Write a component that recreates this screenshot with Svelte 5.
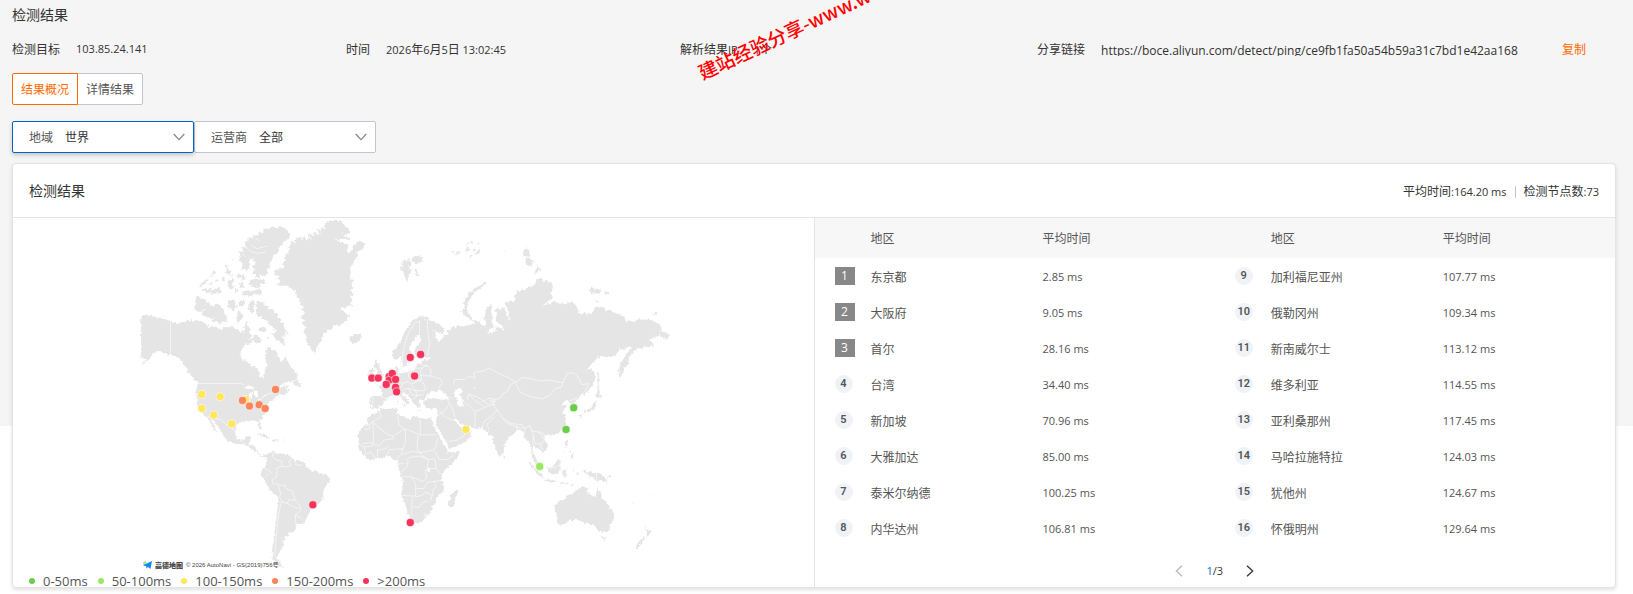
<script>
  const ranks = [
    ['东京都', '2.85 ms'], ['大阪府', '9.05 ms'], ['首尔', '28.16 ms'], ['台湾', '34.40 ms'],
    ['新加坡', '70.96 ms'], ['大雅加达', '85.00 ms'], ['泰米尔纳德', '100.25 ms'], ['内华达州', '106.81 ms'],
    ['加利福尼亚州', '107.77 ms'], ['俄勒冈州', '109.34 ms'], ['新南威尔士', '113.12 ms'], ['维多利亚', '114.55 ms'],
    ['亚利桑那州', '117.45 ms'], ['马哈拉施特拉', '124.03 ms'], ['犹他州', '124.67 ms'], ['怀俄明州', '129.64 ms']
  ].map(([region, time], i) => ({ rank: i + 1, region, time }));
  const halves = [ranks.slice(0, 8), ranks.slice(8)];

  const levels = {
    a: '#6bce4a',
    b: '#9be861',
    c: '#ffe65b',
    d: '#f9855c',
    e: '#f5345b'
  };
  const legend = [
    ['a', '0-50ms'], ['b', '50-100ms'], ['c', '100-150ms'], ['d', '150-200ms'], ['e', '>200ms']
  ];

  const americas = [
    // Mainland North America
    '63,318 70,315 78,311 84,317 90,316 97,320 108,320 117,325 125,325 138,328 150,332 158,338 165,336 174,341 178,341 184,334 190,334 193,338 200,331 208,334 215,325 218,331 222,334 228,329 235,333 246,333 250,338 256,337 262,344 264,350 270,352 278,349 285,352 300,356 301,364 308,354 314,350 326,352 336,349 345,356 355,358 360,368 366,362 372,366 372,350 377,335 382,334 384,348 391,358 388,370 396,376 385,388 396,384 398,390 390,400 376,402 364,418 360,432 363,444 368,448 380,455 395,466 410,474 416,485 417,498 425,505 433,492 434,480 442,468 438,450 434,436 437,430 436,418 442,413 450,414 462,420 470,424 472,434 480,448 486,455 492,446 496,438 502,452 510,460 512,472 524,480 526,488 533,494 528,508 512,514 495,518 484,526 478,534 490,528 505,526 496,536 500,541 515,532 502,547 485,555 478,550 472,558 462,565 456,572 446,578 440,585 444,596 436,610 428,621 418,631 420,642 426,656 420,658 414,647 412,634 400,630 390,634 380,631 370,636 358,637 348,650 345,670 350,685 362,692 372,688 376,680 392,677 391,690 384,698 395,705 405,707 408,720 418,732 428,736 438,731 448,732 440,742 434,740 425,738 412,730 404,722 396,718 390,713 378,710 372,702 365,702 350,702 335,696 318,690 312,682 310,673 300,660 290,645 280,632 270,623 275,634 284,650 294,668 288,664 277,650 268,634 262,620 254,617 245,607 235,600 231,586 230,565 227,545 232,528 236,520 228,511 222,514 216,500 205,488 200,472 192,466 188,455 182,452 180,445 168,440 158,436 150,434 140,434 130,428 122,426 115,422 104,428 96,434 88,448 78,456 63,468 74,452 82,444 72,446 63,442',
    // Greenland
    '625,32 640,29 655,33 668,34 668,42 676,52 688,58 690,68 678,74 664,70 678,80 690,82 690,90 668,86 645,92 664,96 684,104 682,120 685,132 694,118 700,104 710,106 708,96 720,94 734,101 730,114 718,122 708,128 712,140 700,150 702,160 692,168 690,180 694,190 686,198 690,210 702,212 692,222 698,234 690,240 700,250 692,258 698,268 690,276 698,290 684,286 672,294 660,290 670,304 688,316 680,330 668,340 655,346 640,346 636,356 622,362 610,372 606,382 602,394 592,408 585,428 574,420 570,410 562,404 558,390 560,380 550,366 556,350 546,340 552,330 541,322 556,312 544,300 552,290 541,285 538,265 530,260 525,245 510,232 500,226 482,228 470,222 486,212 468,208 480,200 462,192 460,184 475,176 490,172 488,160 496,150 492,140 504,128 508,108 516,92 526,102 524,88 540,80 548,90 552,78 560,92 562,82 572,88 565,68 576,74 582,84 580,64 592,76 600,72 588,56 602,60 604,52 618,60 610,46 618,40',
    '686,386 692,388 688,378 697,382 703,376 712,376 720,372 724,380 718,392 708,400 696,396',
    // Ellesmere and Axel Heiberg
    '510,70 508,80 500,90 488,98 484,108 474,115 474,128 460,136 456,150 446,160 450,172 440,178 442,192 430,200 418,192 420,204 405,205 408,192 395,190 404,180 395,170 410,160 398,154 400,144 386,150 390,166 380,186 372,172 362,182 368,160 355,154 360,138 355,124 368,126 366,112 378,112 374,98 384,94 386,82 396,84 400,74 412,78 418,64 428,68 432,56 445,58 455,50 470,55 475,48 490,54 500,58',
    '390,210 410,206 435,210 434,222 418,220 422,230 402,232 388,224',
    '368,244 385,240 392,246 408,238 425,240 424,254 405,252 390,258 366,255',
    '234,232 242,220 250,216 262,204 260,216 250,224 242,234', '270,198 278,186 290,180 284,194 276,200',
    '313,163 322,166 325,178 334,184 328,194 316,186 320,176', '246,240 256,234 266,240 274,230 272,242 286,236 300,230 298,240 308,244 288,250 272,250 256,246',
    '325,212 340,206 342,216 336,222 345,232 330,238 322,226', '350,192 358,190 365,198 370,192 376,206 368,210 360,202 352,206',
    '356,222 368,218 374,232 362,234', '304,204 312,202 314,212 308,216', '338,144 343,146 340,152', '348,236 356,240 350,248 343,244',
    '284,212 294,208 290,216', '264,222 276,218 272,226', '328,194 340,198 334,202',
    '228,260 236,260 240,266 252,266 262,275 252,284 250,296 238,308 223,298 225,280',
    '256,280 268,276 272,290 288,280 300,284 304,296 312,298 310,308 322,316 318,326 325,335 306,334 300,342 290,334 276,336 280,326 264,322 250,316 244,306 258,302 247,294',
    '325,272 336,268 345,272 346,280 352,290 344,296 340,306 330,294 322,288', '356,274 372,268 374,282 364,290 356,284',
    '354,305 362,304 368,318 362,332 352,340 350,322', '386,276 400,270 404,280 400,290 404,304 392,308 384,296',
    '408,276 416,270 426,276 436,276 430,286 446,288 442,298 458,296 462,308 474,312 470,322 484,326 480,336 492,340 488,350 500,362 506,374 494,368 496,380 486,378 494,390 488,394 500,408 486,404 478,392 468,390 458,374 448,372 468,366 458,350 444,342 446,332 430,328 424,318 412,318 408,304',
    '396,388 402,376 412,374 416,384 428,388 418,400 406,396', '420,352 434,350 440,358 430,366 418,362', '436,380 446,382 442,390',
    '518,514 530,510 540,520 543,528 532,528 522,526',
    // Caribbean
    '405,672 418,669 430,672 440,678 451,685 440,685 425,677 412,674', '455,687 466,686 475,690 468,693 456,692', '486,691 494,691 493,694',
    // South America
    '438,738 446,730 458,722 466,724 462,732 475,728 490,732 503,732 515,742 520,750 535,750 548,755 558,766 558,772 575,782 590,784 602,790 618,794 630,806 628,814 618,827 612,836 609,858 605,872 596,878 582,884 572,890 570,904 562,918 556,930 548,940 538,942 526,937 526,948 529,958 518,966 504,968 504,978 494,978 496,988 488,994 492,1006 484,1014 476,1032 470,1042 476,1052 486,1066 492,1074 478,1068 464,1056 456,1044 460,1034 455,1020 460,1000 459,984 465,960 468,930 471,900 475,875 473,858 458,850 446,834 436,814 422,796 424,780 434,770 441,755'
  ];

  const eurafrica = [
    // Africa
    '118,328 128,325 142,326 165,325 172,328 170,338 176,347 195,350 212,360 214,350 225,347 238,352 252,356 275,354 276,362 283,382 294,400 302,414 306,428 318,442 325,455 340,458 358,452 357,462 348,478 332,494 318,506 308,518 304,530 306,545 312,562 308,576 296,586 287,594 287,608 276,616 274,632 262,648 250,662 236,669 215,669 209,650 201,635 196,612 186,594 183,580 188,560 186,535 178,512 170,498 174,482 160,480 150,468 138,468 122,474 108,474 92,482 76,470 66,460 57,448 52,437 56,424 52,406 60,392 64,382 80,370 82,356 92,344 108,338',
    '352,565 354,578 348,590 344,606 336,622 327,618 326,604 332,592 332,582 344,576',
    // Eurasia
    '89,290 100,287 124,289 126,276 115,258 128,254 132,248 142,246 150,235 160,226 166,218 165,204 170,200 175,206 172,218 184,220 195,217 212,213 225,208 227,196 232,190 240,194 244,184 262,178 270,172 256,170 240,174 230,172 224,160 226,142 238,128 242,112 236,105 228,106 222,120 210,134 206,150 214,158 210,172 204,178 202,192 190,202 184,186 182,165 174,176 162,178 155,164 158,152 168,142 180,126 188,106 196,92 206,76 214,64 228,56 240,48 255,50 266,52 264,60 285,66 300,74 313,90 306,102 290,96 276,88 286,102 288,116 296,128 300,118 310,114 308,106 325,104 318,92 330,88 332,80 348,82 352,74 364,80 378,76 395,72 406,70 398,60 412,64 424,74 434,78 440,70 432,55 435,40 440,22 450,12 456,20 452,34 458,50 455,68 460,82 450,90 440,96 455,100 466,92 466,78 478,84 490,92 486,78 472,68 466,55 470,40 464,28 470,22 482,30 485,20 496,30 500,46 510,64 506,48 504,32 496,22 493,8 505,4 522,6 524,-14 532,-26 545,-32 556,-30 565,-42 582,-44 588,-56 602,-70 606,-58 620,-58 634,-50 641,-36 630,-22 638,-8 622,4 605,18 625,12 640,4 655,10 672,10 690,6 706,12 712,28 718,42 732,38 742,42 756,38 765,20 785,20 798,30 812,30 820,38 845,44 852,50 854,62 870,62 888,66 892,56 908,60 930,58 950,70 964,82 960,92 980,100 988,106 978,118 968,112 955,104 945,110 926,118 940,130 936,138 915,140 905,146 894,144 880,156 866,172 864,190 852,206 840,232 834,216 838,194 848,178 862,158 874,142 860,140 850,148 838,146 828,162 816,170 800,168 770,172 756,190 740,208 752,206 762,216 764,238 758,256 742,274 730,284 718,288 714,298 704,306 710,318 707,330 698,336 692,326 694,312 684,306 682,300 672,304 662,316 680,314 672,328 667,336 676,348 678,366 672,384 655,398 640,404 624,402 612,406 614,420 622,434 620,446 606,460 598,448 588,444 578,440 576,450 582,466 592,480 597,494 588,494 580,480 573,464 572,440 566,426 554,416 550,400 540,388 528,394 512,408 500,420 492,436 490,456 478,470 468,452 460,425 456,408 446,402 438,392 425,384 405,386 388,380 372,378 358,370 348,356 342,350 348,364 360,380 372,388 380,380 396,400 388,416 365,430 345,440 326,446 318,426 306,404 292,382 286,366 290,352 292,335 288,326 270,325 255,322 248,305 258,298 280,294 300,298 322,300 326,292 312,280 298,268 288,278 276,270 264,282 258,290 248,300 240,300 234,306 242,318 232,324 224,314 214,298 200,284 188,276 186,284 198,296 210,306 202,314 190,300 176,284 168,282 155,290 142,292 136,302 128,312 110,325 95,325 88,310',
    '104,178 112,180 110,188 120,192 116,202 124,212 130,226 124,240 112,243 98,246 108,238 104,228 112,220 110,206 102,200 104,190', '86,214 98,206 102,214 98,226 86,230 84,222',
    '27,106 36,110 44,102 55,104 62,100 64,112 54,124 42,130 30,124',
    '168,298 172,302 171,316 167,314', '184,312 198,311 194,320', '228,331 244,331 240,334', '272,320 284,316 278,324',
    // Arctic islands
    '178,-118 186,-112 190,-122 200,-118 210,-128 208,-114 216,-112 206,-98 212,-86 204,-72 202,-54 194,-66 190,-84 180,-94 186,-104', '214,-126 228,-132 240,-132 248,-128 246,-116 234,-108 220,-114', '222,-92 232,-86 236,-70 228,-74',
    '336,-144 344,-146 340,-138', '350,-146 358,-152 356,-140 346,-132', '372,-148 384,-160 388,-150 378,-144', '390,-176 398,-178 396,-168', '398,-152 408,-158 406,-148 398,-142', '410,-168 416,-174 414,-164', '385,-130 398,-134 392,-126', '404,-140 422,-156 416,-142 406,-136', '376,-166 384,-172 382,-162',
    '436,-56 438,-48 424,-38 412,-30 400,-18 392,-6 384,6 380,22 382,36 390,46 396,58 402,66 386,56 372,46 362,32 374,22 370,8 380,-6 382,-20 394,-28 406,-38 424,-46',
    '550,-150 560,-158 566,-148 570,-136 560,-130 548,-134', '556,-124 568,-128 578,-118 576,-104 564,-102 556,-112', '590,-106 594,-98 602,-92 590,-84 582,-78 586,-92',
    '748,-34 758,-38 764,-30 774,-36 782,-30 778,-20 764,-20 752,-20', '790,-26 802,-24 808,-18 796,-18', '764,0 772,2 776,8 768,6', '936,40 950,36 952,42 940,44', '484,-150 490,-150 488,-146',
    // East Asia
    '770,214 776,228 778,244 774,258 780,286 773,284 770,262 773,240', '768,274 776,280 786,286 776,292 768,294', '766,298 768,314 762,326 748,334 738,336 730,334 740,328 752,322 760,312', '718,344 726,342 724,350 718,354', '728,338 738,340 730,343',
    '620,412 628,410 626,416', '674,422 680,422 682,434 676,438', '678,440 684,444 680,446', '690,466 698,460 698,474 692,476', '682,452 692,452 690,460', '490,462 497,470 494,478 490,474', '666,466 674,454 672,460',
    // Southeast Asia and Oceania
    '561,482 572,488 582,502 596,514 606,522 608,534 598,530 584,512 574,500', '607,535 622,537 640,541 652,545 640,546 618,543', '622,502 634,502 644,490 650,480 658,478 662,484 656,492 662,502 656,512 650,522 636,522 624,516', '668,514 676,508 682,510 672,516 680,524 682,530 674,524 674,534 669,526', '658,546 672,547 686,549 680,552 660,549', '686,558 700,550 694,558', '698,504 702,512 698,514', '704,520 716,520 714,524',
    '724,510 736,512 738,520 746,512 760,516 775,518 790,528 796,538 806,550 792,544 780,538 768,546 762,536 750,530 740,524', '800,530 812,524 812,530 802,534', '822,530 828,534', '872,600 880,608 878,610', '928,586 933,588 930,590',
    '772,556 776,570 782,578 784,594 798,606 804,618 814,626 821,642 820,658 810,674 804,694 790,696 772,690 766,680 756,672 748,676 742,664 734,672 722,662 706,658 688,662 672,672 656,674 650,664 652,652 644,632 643,614 658,602 674,596 684,582 696,580 706,572 716,564 724,560 742,562 740,574 754,588 766,588 770,572',
    '784,708 798,710 792,724', '912,676 920,688 934,692 928,702 918,712 920,696', '912,708 914,716 902,732 892,744 884,740 892,728 904,716'
  ];

  const americasWhite = [
    '372,532 384,526 398,530 406,537 392,536 384,540', '392,546 398,546 392,566 388,576 388,560', '402,540 412,546 414,556 408,562 402,552', '412,570 426,562 422,568 414,573', '430,556 442,553 436,559'
  ];
  const eurafricaWhite = ['345,268 362,264 368,276 358,282 362,292 372,300 366,306 370,320 358,320 350,308 352,296 340,282', '400,262 406,264 402,270', '262,506 268,508 264,514'];

  const americasLines = [
    '151,332 151,430', '236,520 362,520 372,524', '424,564 440,552 462,548 476,530', '262,620 290,626 304,628 318,644 330,648 345,664', '362,692 372,698 378,708', '390,698 384,704',
    '378,114 396,126 414,130 438,126', '392,104 410,116 442,108', '406,84 420,96', '366,132 378,142',
    '462,724 456,738 468,750 484,752 486,768 470,774 470,800 456,808 458,820 474,822', '515,742 506,756 512,766 500,770 486,768', '526,752 528,766 545,764', '433,776 446,780 456,790', '446,790 436,800', '474,822 480,826 494,824 498,836 514,842 522,858 526,872 536,880 542,900 526,914 526,937', '474,826 482,850 478,860 484,874 502,880 506,868 524,870', '484,874 478,900 472,940 468,980 466,1010 464,1040 474,1050', '502,880 520,890 536,896', '526,914 544,926'
  ];
  const eurafricaLines = [
    '118,330 121,352 102,362 84,374 70,376', '88,374 88,386 72,388', '98,366 120,386 144,404 158,408 194,386', '172,345 176,376 194,386 240,404', '240,356 240,404 288,404', '98,366 100,428 66,430', '54,432 72,440 76,458', '72,440 96,438 100,428', '100,434 118,436 130,420 158,416 158,408', '112,474 112,450 134,446 146,438', '76,462 92,456 104,474', '140,466 148,448 188,446', '188,446 196,424 196,388', '188,446 184,462 170,474', '234,404 230,432 234,452 246,466 264,478', '292,412 288,436 280,450 236,458', '186,464 214,454 236,456', '198,480 206,472 240,468 264,478 262,500 256,516 260,534 248,544 230,536 212,530 190,530', '204,480 200,500 184,514', '170,492 192,490', '188,586 226,588 226,552 214,530', '226,564 250,566 262,546 282,544 288,560 280,566 276,586', '282,544 306,540', '264,504 288,506 304,524', '264,478 284,476 288,506', '282,452 298,478 322,478 342,464', '324,454 318,462', '216,590 214,646', '220,620 236,622 248,606 264,602', '226,590 244,586 256,576 276,586 270,600', '250,645 254,640 260,644 255,650 250,645',
    '340,254 342,238 372,238 384,230 404,232 400,218 430,212 446,204 464,214 482,224 504,232 524,246', '524,246 510,254 502,274 488,280 484,292 466,298 446,294 430,304 410,290 384,282 382,300', '524,246 548,232 572,236 600,242 628,240 644,244 668,248 664,260 644,266 628,286 606,296 572,290 540,276 524,246', '668,248 680,220 700,218 716,234 724,254 744,250 736,272 720,286 714,298', '684,304 712,292', '466,298 458,312 468,326 484,350 510,370 546,374 554,384', '486,356 506,372 526,380 550,384', '528,376 530,392', '424,386 432,364 456,346 470,330', '404,386 404,334 424,326 442,318 466,312', '372,306 392,322 404,334', '384,282 406,302 430,318', '430,304 446,314', '446,300 462,304 448,310', '446,388 440,372 462,350', '322,300 336,322 344,350', '292,346 314,332 326,312', '296,330 316,352 344,362', '326,424 350,420 372,406 376,390', '554,384 568,376 574,392 580,408 576,424 582,440', '554,384 552,402', '574,392 596,396 614,420 602,432 584,430 580,408', '602,432 602,444 612,448', '596,396 606,396 612,406', '636,502 648,502 656,494', '768,518 768,546',
    '186,196 188,156 196,124 206,96 222,72 238,62 238,102', '250,56 262,62 262,90 268,130 262,166', '244,184 246,196 262,196 272,210 272,228 300,236 306,248 296,262', '226,204 246,204 240,220 244,238 226,242 206,232 204,216', '246,204 262,196', '242,226 272,228', '176,218 172,240 186,250 204,244 212,252 244,240 256,262 252,272 226,272 214,256', '150,236 168,254 164,280', '186,250 182,262 166,266', '188,270 204,264 226,272 232,286 252,284', '204,264 216,284 232,286 220,296', '124,290 146,298', '98,290 98,322', '252,306 256,296', '304,284 324,290 336,296'
  ];

  const americasNodes = [
    [245, 553, 'c'], [300, 560, 'c'], [376, 568, 'c'], [245, 595, 'c'], [281, 615, 'c'], [335, 641, 'c'],
    [466, 538, 'd'], [367, 571, 'd'], [388, 588, 'd'], [417, 584, 'd'], [435, 595, 'd'], [578, 884, 'e']
  ];
  const eurafricaNodes = [
    [147, 229, 'e'], [147, 240, 'e'], [95, 234, 'e'], [114, 234, 'e'], [138, 253, 'e'], [156, 220, 'e'],
    [166, 238, 'e'], [166, 262, 'e'], [169, 275, 'e'], [223, 228, 'e'], [210, 172, 'e'], [241, 163, 'e'],
    [377, 388, 'c'], [700, 323, 'a'], [677, 388, 'a'], [598, 499, 'b'], [210, 667, 'e']
  ];
</script>

{#snippet region(place, lands, holes, lines, nodes)}
  <g transform={place}>
    <g filter="url(#coast)">
      {#each lands as points}<polygon class="land" {points} />{/each}
      {#each holes as points}<polygon class="water" {points} />{/each}
    </g>
    {#each lines as points}<polyline class="border" {points} />{/each}
    {#each nodes as [x, y, level]}<circle class="node" cx={x} cy={y} r="12" fill={levels[level]} />{/each}
  </g>
{/snippet}

<main class="page">
  <h1>检测结果</h1>

  <div class="meta">
    <div class="item"><span>检测目标</span><span class="num">103.85.24.141</span></div>
    <div class="item"><span>时间</span><span><b class="num">2026</b>年<b class="num">6</b>月<b class="num">5</b>日 <b class="num">13:02:45</b></span></div>
    <div class="item"><span>解析结果<b class="num">IP</b></span><span><b class="num">1</b>个</span></div>
    <div class="item"><span>分享链接</span><span class="url">https://boce.aliyun.com/detect/ping/ce9fb1fa50a54b59a31c7bd1e42aa168</span><button class="copy">复制</button></div>
  </div>
  <div class="watermark">建站经验分享-www.w</div>

  <div class="tabs">
    <button class="tab active">结果概况</button>
    <button class="tab">详情结果</button>
  </div>

  <div class="filters">
    <div class="filter focused">
      <label for="area">地域</label>
      <select id="area"><option>世界</option></select>
      <svg class="chevron" viewBox="0 0 12 8"><path d="M.7 1 6 6.6 11.3 1" /></svg>
    </div>
    <div class="filter">
      <label for="isp">运营商</label>
      <select id="isp"><option>全部</option></select>
      <svg class="chevron" viewBox="0 0 12 8"><path d="M.7 1 6 6.6 11.3 1" /></svg>
    </div>
  </div>

  <section class="card">
    <header>
      <h2>检测结果</h2>
      <div class="summary">
        <span>平均时间<b class="num">:164.20 ms</b></span>
        <i class="bar"></i>
        <span>检测节点数<b class="num">:73</b></span>
      </div>
    </header>
    <div class="body">
      <div class="map">
        <svg class="world" viewBox="0 0 800 352" role="img" aria-label="检测结果">
          <defs>
            <filter id="coast" x="-5%" y="-5%" width="110%" height="110%">
              <feTurbulence type="fractalNoise" baseFrequency="0.14" numOctaves="2" seed="4" result="n" />
              <feDisplacementMap in="SourceGraphic" in2="n" scale="12" xChannelSelector="R" yChannelSelector="G" />
            </filter>
          </defs>
          {@render region('translate(107 -8) scale(.33333)', americas, americasWhite, americasLines, americasNodes)}
          {@render region('translate(327 82) scale(.33333)', eurafrica, eurafricaWhite, eurafricaLines, eurafricaNodes)}
        </svg>
        <div class="credit">
          <svg viewBox="0 0 9 8"><path d="M0 1 3 0 4 4 1 5z" fill="#a5e887" /><path d="M0 4.300 9 0 7.500 8 5 6 3.500 7.500 3.200 5.200z" fill="#1488f5" /></svg>
          <strong>高德地图</strong>
          <span>© 2026 AutoNavi - GS(2019)756号</span>
        </div>
        <ul class="legend">
          {#each legend as [level, text]}
            <li><i class="dot" style:background={levels[level]}></i>{text}</li>
          {/each}
        </ul>
      </div>
      <div class="ranking">
        <div class="tables">
          {#each halves as rows}
            <table>
              <thead><tr><th class="rank"></th><th class="place">地区</th><th>平均时间</th></tr></thead>
              <tbody>
                {#each rows as row}
                  <tr>
                    <td class="rank"><span class="badge" class:top={row.rank < 4}>{row.rank}</span></td>
                    <td class="text">{row.region}</td>
                    <td class="text num">{row.time}</td>
                  </tr>
                {/each}
              </tbody>
            </table>
          {/each}
        </div>
        <nav class="pager">
          <button class="prev" aria-label="上一页" disabled><svg viewBox="0 0 8 12"><path d="M7 .7 1.300 6 7 11.300" /></svg></button>
          <span><em>1</em>/3</span>
          <button class="next" aria-label="下一页"><svg viewBox="0 0 8 12"><path d="M1 .7 6.700 6 1 11.300" /></svg></button>
        </nav>
      </div>
    </div>
  </section>
</main>

<style>
  :global(body) { background: #fff; }
  .page, .page * { box-sizing: border-box; }
  .page {
    position: relative;
    overflow: hidden;
    padding: 4px 17px 6px 12px;
    background: linear-gradient(#f5f5f5, #f5f5f5) top / 100% 426px no-repeat;
    color: #333;
    font: 12px/20px "Noto Sans CJK SC", "Open Sans", sans-serif;
  }
  h1, h2 { margin: 0; font-size: 14px; font-weight: 400; line-height: 20px; }
  button, select { font: inherit; color: inherit; margin: 0; padding: 0; border: 0; background: none; }
  .num { font-family: "Open Sans", sans-serif; font-size: 11px; font-weight: 400; }
  .meta {
    display: grid;
    grid-template-columns: 334fr 334fr 357fr 579fr;
    margin: 15px 0 14px;
  }
  .item { display: flex; align-items: center; gap: 16px; height: 20px; white-space: nowrap; }
  .item > span:first-child { line-height: 20px; }
  .url { flex: 0 1 445px; height: 14px; overflow: hidden; font-family: "Open Sans", sans-serif; line-height: 18px; }
  .copy, .pager button { cursor: pointer; }
  .copy { color: #ff6a00; line-height: 20px; }
  .watermark {
    position: absolute;
    left: 699px;
    top: 59px;
    color: #f00;
    font-size: 19px;
    font-weight: 500;
    line-height: 28px;
    white-space: nowrap;
    transform: rotate(-25deg);
    transform-origin: left center;
    pointer-events: none;
  }
  .tabs { display: flex; }
  .tab {
    height: 32px;
    padding: 0 8px;
    border: 1px solid #c0c6cc;
    border-radius: 0 2px 2px 0;
    background: #fff;
    color: #555;
  }
  .tab + .tab { margin-left: -1px; }
  .active { position: relative; z-index: 1; border-color: #ff6a00; border-radius: 2px 0 0 2px; color: #ff6a00; }
  .filters { display: flex; margin: 16px 0 10px; }
  .filter {
    position: relative;
    display: flex;
    align-items: center;
    gap: 12px;
    width: 182px;
    height: 32px;
    padding-left: 16px;
    border: 1px solid #c0c6cc;
    border-radius: 2px;
    background: #fff;
  }
  .filter label { color: #555; }
  .focused { border-color: #0064c8; box-shadow: 0 2px 4px rgba(0, 0, 0, .2); z-index: 1; }
  select { flex: 1; height: 28px; appearance: none; outline: 0; }
  .chevron { position: absolute; right: 8px; width: 12px; height: 8px; pointer-events: none; }
  .chevron path, .pager path { fill: none; stroke: #888; stroke-width: 1.3; }
  .card {
    border: 1px solid #e3e4e6;
    border-radius: 4px;
    background: #fff;
    box-shadow: 0 2px 4px rgba(0, 0, 0, .12);
    overflow: hidden;
  }
  header {
    display: flex;
    align-items: center;
    justify-content: space-between;
    height: 54px;
    padding: 0 16px;
    border-bottom: 1px solid #e3e4e6;
  }
  h2 { padding-bottom: 2px; }
  .summary { display: flex; align-items: center; gap: 8px; padding-top: 2px; }
  .bar { width: 1px; height: 12px; background: #c4c6cf; }
  .body { display: flex; }
  .map { position: relative; flex: 1; min-width: 0; }
  .world { display: block; width: 100%; }
  .land { fill: #e5e5e5; }
  .water { fill: #fff; }
  .border { fill: none; stroke: #fff; stroke-width: 2; stroke-linejoin: round; opacity: .85; }
  .node { stroke: #fff; stroke-width: 2; stroke-opacity: .8; }
  .credit {
    position: absolute;
    left: 130px;
    bottom: 16px;
    display: flex;
    align-items: center;
    gap: 3px;
    height: 12px;
    color: #444;
    font: 6px/12px "Liberation Sans", "Noto Sans CJK SC", sans-serif;
  }
  .credit svg { width: 9px; height: 8px; }
  .credit strong { font: 900 7px/12px "Noto Sans CJK SC", sans-serif; }
  .legend {
    display: flex;
    gap: 10px;
    height: 17px;
    margin: 0;
    padding: 0 0 0 16px;
    list-style: none;
    color: #555;
    font: 13px/22px "Open Sans", sans-serif;
  }
  .legend li { display: flex; align-items: center; gap: 8px; height: 22px; }
  .dot { width: 6px; height: 6px; border-radius: 50%; }
  .ranking { flex: 1; min-width: 0; border-left: 1px solid #e3e4e6; }
  .tables { display: flex; }
  table { flex: 1; width: 50%; border-collapse: collapse; table-layout: fixed; color: #555; }
  th, td { height: 36px; padding: 0; text-align: left; font-weight: 400; vertical-align: middle; }
  th { height: 40px; background: #f7f7f7; }
  th.rank { width: 56px; }
  th.place { width: 172px; }
  td.rank { padding-left: 20px; }
  td.text { padding-top: 2px; }
  .badge {
    display: block;
    width: 18px;
    height: 18px;
    border-radius: 50%;
    background: #eff3f8;
    font: 600 11px/18px Roboto, sans-serif;
    text-align: center;
  }
  .badge.top { width: 20px; border-radius: 0; background: #888; color: #fff; font: 400 12px/18px "Open Sans", sans-serif; }
  .pager { display: flex; align-items: center; justify-content: center; gap: 23px; padding-top: 15px; font: 11px/20px "Open Sans", sans-serif; }
  .pager button { display: flex; }
  .pager svg { width: 8px; height: 12px; }
  .pager .prev path { stroke: #bbb; }
  .pager .next path { stroke: #333; }
  em { font-style: normal; color: #0070cc; }
</style>
